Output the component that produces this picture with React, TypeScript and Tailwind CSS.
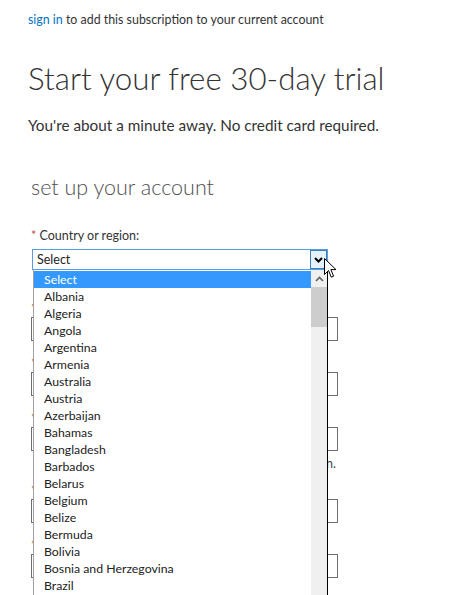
import React from "react";

const countries = [
  "Select",
  "Albania",
  "Algeria",
  "Angola",
  "Argentina",
  "Armenia",
  "Australia",
  "Austria",
  "Azerbaijan",
  "Bahamas",
  "Bangladesh",
  "Barbados",
  "Belarus",
  "Belgium",
  "Belize",
  "Bermuda",
  "Bolivia",
  "Bosnia and Herzegovina",
  "Brazil",
  "Brunei",
];

// fields hidden behind the open dropdown
const Field = ({ hint, top = "mt-[14px]" }: { hint?: boolean; top?: string }) => (
  <div className={top}>
    <div className="h-[17px] text-[12.5px] leading-[17px] text-[#333]">
      <span className="text-[#c0504d]">*</span> Field
    </div>
    <div className="h-[24px] w-[307px] border border-[#6f6f6f] bg-white" />
    {hint && (
      <div className="mt-[4px] h-[17px] w-[307px] pr-[2px] text-right text-[12.5px] leading-[17px] text-[#444]">
        information.
      </div>
    )}
  </div>
);

export default function App() {
  return (
    <div
      className="relative h-[595px] w-[471px] overflow-hidden bg-white pl-[28px] text-[#333]"
      style={{ fontFamily: '"Segoe UI", Lato, "Noto Sans", sans-serif' }}
    >
      <p className="pt-[11px] text-[12.4px] leading-[18px]">
        <span className="text-[#0072c6]">sign in</span> to add this subscription
        to your current account
      </p>

      <h1 className="mt-[29px] text-[31.3px] font-light leading-[40px] text-[#333]">
        Start your free 30-day trial
      </h1>

      <p className="mt-[17px] text-[15.3px] leading-[20px] text-[#333]">
        You're about a minute away. No credit card required.
      </p>

      <h2 className="mt-[39px] pl-[3px] text-[21.5px] font-light leading-[26px] text-[#505050]">
        set up your account
      </h2>

      <div className="mt-[27px] pl-[3px] text-[12.5px] leading-[17px]">
        <span className="text-[#c0504d]">*</span> Country or region:
      </div>

      <div className="ml-[4px] mt-[5px] flex h-[21px] w-[296px] border border-[#569de5] bg-white">
        <div className="flex-1 pl-[4px] text-[12.5px] leading-[19px] text-[#222]">
          Select
        </div>
        <div className="flex h-full w-[17px] items-center justify-center border border-[#3c7fb1] bg-[#e5f1fb]">
          <svg width="9" height="6" viewBox="0 0 9 6">
            <path d="M1 1 L4.5 4.5 L8 1" fill="none" stroke="#000" strokeWidth="2" />
          </svg>
        </div>
      </div>

      <div className="pl-[3px]">
        <Field top="mt-[30px]" />
        <Field />
        <Field hint />
        <Field top="mt-[10px]" />
        <Field />
      </div>

      {/* open dropdown list */}
      <div className="absolute left-[33px] top-[270px] flex h-[340px] w-[295px] border-l border-r border-l-[#a0a0a0] border-r-black bg-white">
        <ul className="flex-1 pt-px">
          {countries.map((c, i) => (
            <li
              key={c}
              className={
                "h-[17px] pl-[10px] text-[12.3px] leading-[17px] " +
                (i === 0 ? "bg-[#3399ff] text-white" : "text-[#222]")
              }
            >
              {c}
            </li>
          ))}
        </ul>
        <div className="flex w-[16px] flex-col bg-[#f0f0f0]">
          <div className="flex h-[17px] items-center justify-center">
            <svg width="9" height="6" viewBox="0 0 9 6">
              <path d="M1 5 L4.5 1.5 L8 5" fill="none" stroke="#606060" strokeWidth="1.6" />
            </svg>
          </div>
          <div className="h-[40px] bg-[#cdcdcd]" />
        </div>
      </div>

      {/* mouse pointer */}
      <svg
        className="absolute left-[324px] top-[258px]"
        width="13"
        height="21"
        viewBox="0 0 13 21"
      >
        <path
          d="M0.5 0.5 L0.5 16.5 L4.5 12.5 L7.3 19.2 L9.6 18.2 L6.9 11.6 L12 11.6 Z"
          fill="#fff"
          stroke="#000"
          strokeWidth="1"
          strokeLinejoin="round"
        />
      </svg>
    </div>
  );
}
